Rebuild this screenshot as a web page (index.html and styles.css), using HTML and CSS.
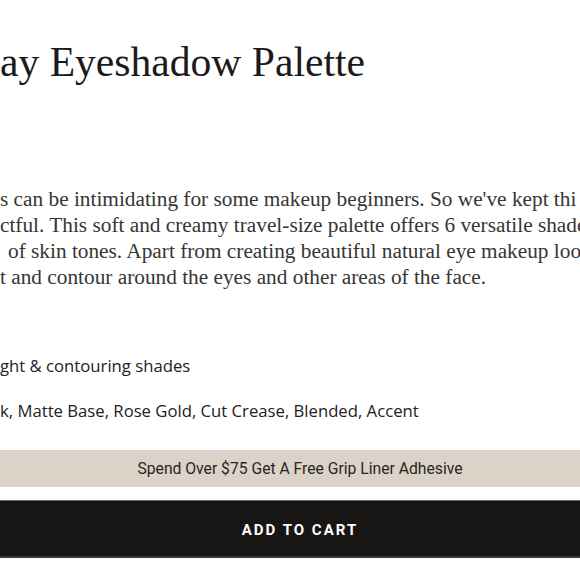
FILE: index.html
```html
<!DOCTYPE html>
<html lang="en">
<head>
<meta charset="utf-8">
<title>Eyeshadow Palette</title>
<link rel="stylesheet" href="styles.css">
</head>
<body>
<div class="page">
  <section class="info">
    <h1 class="title">ay Eyeshadow Palette</h1>
    <div class="desc">
      <div class="line">s can be intimidating for some makeup beginners. So we've kept thi</div>
      <div class="line">ctful. This soft and creamy travel-size palette offers 6 versatile shade</div>
      <div class="line l3">of skin tones. Apart from creating beautiful natural eye makeup loo</div>
      <div class="line">t and contour around the eyes and other areas of the face.</div>
    </div>
    <ul class="facts">
      <li class="fact">ght &amp; contouring shades</li>
      <li class="fact">k, Matte Base, Rose Gold, Cut Crease, Blended, Accent</li>
    </ul>
  </section>
  <div class="promo">Spend Over $75 Get A Free Grip Liner Adhesive</div>
  <button class="cart" type="button">ADD TO CART</button>
</div>
</body>
</html>
```
FILE: styles.css
```css
html, body {
  margin: 0;
  padding: 0;
  width: 580px;
  height: 580px;
  overflow: hidden;
  background: #ffffff;
}

.page {
  width: 640px;
  margin-left: -20px;
  display: flex;
  flex-direction: column;
}

.info {
  padding-top: 38px;
  padding-left: 20px;
}

.title {
  margin: 0;
  font-family: "Liberation Serif", "Times New Roman", serif;
  font-weight: 400;
  font-size: 41.6px;
  line-height: 48px;
  color: #1b1b1b;
  white-space: nowrap;
}

.desc {
  margin-top: 100px;
  font-family: "Liberation Serif", "Times New Roman", serif;
  font-size: 21.3px;
  line-height: 26px;
  color: #363636;
}

.line {
  white-space: nowrap;
}

.l3 {
  padding-left: 8px;
}

.facts {
  list-style: none;
  margin: 64px 0 0;
  padding: 0;
  display: flex;
  flex-direction: column;
  gap: 21px;
  font-family: "Open Sans", "Noto Sans", sans-serif;
  font-size: 16.7px;
  line-height: 24px;
  color: #222222;
}

.fact {
  white-space: nowrap;
}

.promo {
  margin-top: 27px;
  height: 37px;
  display: flex;
  align-items: center;
  justify-content: center;
  background: #dbd2c8;
  font-family: Roboto, "Liberation Sans", sans-serif;
  font-size: 15.7px;
  color: #2a2623;
}

.cart {
  margin-top: 13px;
  height: 58px;
  border: none;
  border-top: 1px solid #6a6a6a;
  border-bottom: 2px solid #3a3a3a;
  background: #171615;
  color: #ffffff;
  font-family: Roboto, "Liberation Sans", sans-serif;
  font-weight: 700;
  font-size: 15px;
  letter-spacing: 2px;
  padding: 2px 0 0;
  cursor: pointer;
}
```
